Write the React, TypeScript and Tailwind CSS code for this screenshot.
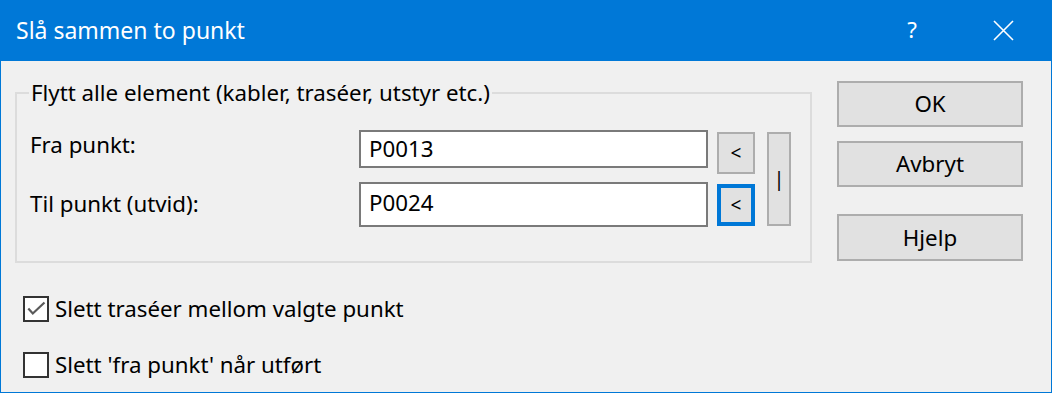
import React from "react";

const font = { fontFamily: '"Noto Sans", "Open Sans", sans-serif' };

const DialogButton = ({ label, className = "" }: { label: string; className?: string }) => (
  <div
    className={`w-[186px] flex items-center justify-center border-2 border-[#adadad] bg-[#e1e1e1] text-[22.3px] leading-[30px] text-black ${className}`}
  >
    {label}
  </div>
);

const TextBox = ({ value, className = "" }: { value: string; className?: string }) => (
  <div
    className={`w-[349px] border-2 border-[#7a7a7a] bg-white pl-[8px] pt-[2px] text-[22.3px] leading-[30px] text-black ${className}`}
  >
    {value}
  </div>
);

const CheckBox = ({ label, checked }: { label: string; checked?: boolean }) => (
  <div className="flex items-center">
    <div className="w-[26px] h-[26px] border-2 border-[#333333] bg-white">
      {checked && (
        <svg width="22" height="22" viewBox="0 0 22 22">
          <path d="M3.3 10.5 L7.8 15.5 L19.5 4.5" fill="none" stroke="#5a5a5a" strokeWidth="2.2" />
        </svg>
      )}
    </div>
    <span className="ml-[6px] text-[22.3px] leading-[30px] text-black">{label}</span>
  </div>
);

export default function App() {
  return (
    <div
      style={font}
      className="w-[1052px] h-[393px] bg-[#f0f0f0] border-x border-b border-[#0078d7] flex flex-col overflow-hidden"
    >
      {/* title bar */}
      <div className="h-[61px] shrink-0 bg-[#0078d7] flex items-center pl-[15px] pr-[37px] text-white">
        <span className="text-[23px] leading-[30px] pb-[1px]">Slå sammen to punkt</span>
        <span className="ml-auto text-[22.3px] leading-[30px] pb-[2px]">?</span>
        <svg className="ml-[76px]" width="21" height="21" viewBox="0 0 21 21">
          <path d="M1 1 L20 20 M20 1 L1 20" stroke="white" strokeWidth="1.6" />
        </svg>
      </div>

      <div className="flex">
        {/* left part */}
        <div className="ml-[14px] flex flex-col">
          <fieldset className="mt-[17px] w-[797px] border-2 border-[#dcdcdc] px-0 pt-[22px] pb-[34px] m-0">
            <legend className="ml-[12px] px-[2px] text-[22.3px] leading-[30px] text-black">
              Flytt alle element (kabler, traséer, utstyr etc.)
            </legend>
            <div className="flex items-start">
              <div className="w-[342px] pl-[13px] flex flex-col text-[22.3px] leading-[30px] text-black">
                <span>Fra punkt:</span>
                <span className="mt-[29px]">Til punkt (utvid):</span>
              </div>
              <div className="flex flex-col">
                <TextBox value="P0013" className="h-[38px]" />
                <TextBox value="P0024" className="h-[45px] mt-[14px] pt-[4px]" />
              </div>
              <div className="ml-[9px] flex flex-col">
                <div className="mt-[2px] w-[38px] h-[42px] border-2 border-[#adadad] bg-[#e1e1e1] flex items-center justify-center text-[19px] text-black">
                  &lt;
                </div>
                <div className="mt-[10px] w-[38px] h-[42px] border-4 border-[#0078d7] bg-[#e1e1e1] flex items-center justify-center text-[19px] text-black">
                  &lt;
                </div>
              </div>
              <div className="ml-[12px] mt-[2px] w-[24px] h-[94px] border-2 border-[#adadad] bg-[#e1e1e1] flex items-center justify-center text-[20px] text-black">
                |
              </div>
            </div>
          </fieldset>

          <div className="ml-[8px] mt-[31px] flex flex-col">
            <CheckBox label="Slett traséer mellom valgte punkt" checked />
            <div className="mt-[26px]">
              <CheckBox label="Slett 'fra punkt' når utført" />
            </div>
          </div>
        </div>

        {/* right buttons */}
        <div className="ml-[25px] mt-[20px] flex flex-col">
          <DialogButton label="OK" className="h-[46px]" />
          <DialogButton label="Avbryt" className="h-[46px] mt-[14px]" />
          <DialogButton label="Hjelp" className="h-[47px] mt-[27px]" />
        </div>
      </div>
    </div>
  );
}
